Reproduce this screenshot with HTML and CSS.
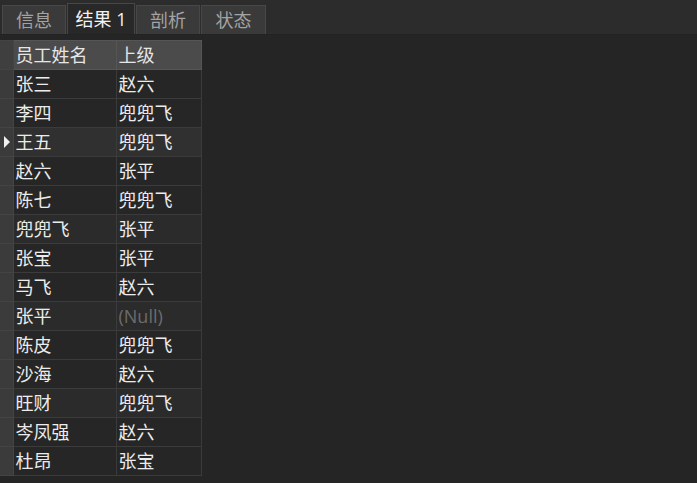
FILE: index.html
```html
<!DOCTYPE html>
<html lang="zh-CN">
<head>
    <meta charset="UTF-8">
    <title>结果 1</title>
    <link rel="stylesheet" href="styles.css">
</head>
<body>
    <div class="tabbar">
        <div class="tab">信息</div>
        <div class="tab active">结果 1</div>
        <div class="tab">剖析</div>
        <div class="tab last">状态</div>
    </div>

    <div class="result">
        <table class="grid">
            <thead>
                <tr>
                    <th class="ind"></th>
                    <th class="c1">员工姓名</th>
                    <th class="c2">上级</th>
                </tr>
            </thead>
            <tbody>
                <tr><td class="ind"></td><td>张三</td><td>赵六</td></tr>
                <tr><td class="ind"></td><td>李四</td><td>兜兜飞</td></tr>
                <tr class="current"><td class="ind"><span class="arrow"></span></td><td>王五</td><td>兜兜飞</td></tr>
                <tr><td class="ind"></td><td>赵六</td><td>张平</td></tr>
                <tr><td class="ind"></td><td>陈七</td><td>兜兜飞</td></tr>
                <tr class="alt"><td class="ind"></td><td>兜兜飞</td><td>张平</td></tr>
                <tr><td class="ind"></td><td>张宝</td><td>张平</td></tr>
                <tr><td class="ind"></td><td>马飞</td><td>赵六</td></tr>
                <tr class="alt"><td class="ind"></td><td>张平</td><td class="null">(Null)</td></tr>
                <tr><td class="ind"></td><td>陈皮</td><td>兜兜飞</td></tr>
                <tr><td class="ind"></td><td>沙海</td><td>赵六</td></tr>
                <tr class="alt"><td class="ind"></td><td>旺财</td><td>兜兜飞</td></tr>
                <tr><td class="ind"></td><td>岑凤强</td><td>赵六</td></tr>
                <tr><td class="ind"></td><td>杜昂</td><td>张宝</td></tr>
            </tbody>
        </table>
    </div>
</body>
</html>
```

FILE: styles.css
```css
* {
    margin: 0;
    padding: 0;
    box-sizing: border-box;
}

body {
    font-family: "Open Sans", "Noto Sans CJK SC", sans-serif;
    background: #252525;
    width: 697px;
    height: 483px;
    overflow: hidden;
}

.tabbar {
    display: flex;
    align-items: flex-end;
    height: 35px;
    padding-left: 2px;
    background: #2c2c2c;
    border-bottom: 1px solid #232323;
}

.tab {
    width: 64px;
    height: 29px;
    margin-right: 1px;
    background: #3a3a3a;
    border: 1px solid #474747;
    border-bottom: none;
    color: #a3a3a3;
    font-size: 18px;
    line-height: 29px;
    text-align: center;
}

.tab.active {
    width: 68px;
    height: 31px;
    background: #282828;
    color: #f2f2f2;
    line-height: 30px;
}

.tab.last {
    width: 65px;
}

.result {
    padding-top: 5px;
}

.grid {
    border-collapse: collapse;
    font-size: 18px;
    color: #ececec;
}

.grid th,
.grid td {
    height: 29px;
    padding: 0 0 0 2px;
    border: 1px solid #3b3b3b;
    text-align: left;
    font-weight: normal;
    line-height: 28px;
    white-space: nowrap;
}

.grid th {
    background: #4b4b4b;
    border-color: #555;
    color: #e6e6e6;
}

.grid .c1 {
    width: 103px;
}

.grid .c2 {
    width: 85px;
}

.grid td {
    background: #262626;
}

.grid tr.alt td {
    background: #2b2b2b;
}

.grid tr.current td {
    background: #303030;
}

.grid .ind,
.grid tr td.ind {
    width: 13px;
    padding: 0;
    background: #3b3b3b;
    border-color: #444;
    border-left: none;
    position: relative;
}

.grid th.ind {
    background: #3f3f3f;
}

.arrow {
    position: absolute;
    left: 4px;
    top: 8px;
    border-left: 6px solid #f0f0f0;
    border-top: 6px solid transparent;
    border-bottom: 6px solid transparent;
}

.grid td.null {
    color: #6b6b6b;
}
```
